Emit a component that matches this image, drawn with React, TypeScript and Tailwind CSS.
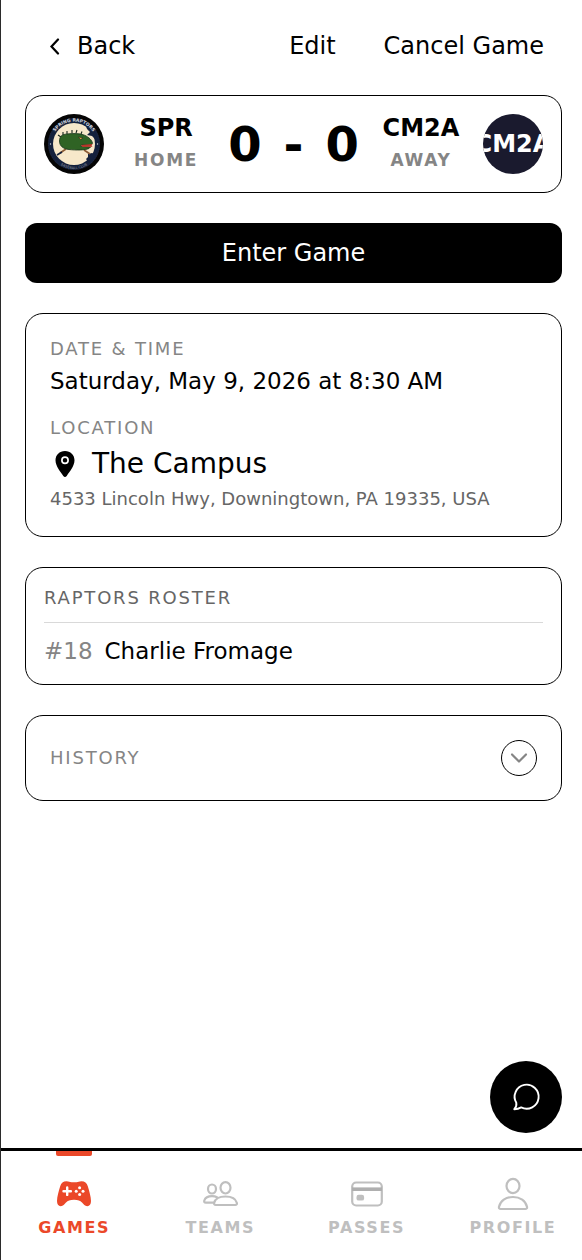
import { useState } from "react";
import type { ReactNode } from "react";

interface Player {
  number: number;
  name: string;
}

interface NavItem {
  label: string;
  href: string;
  icon: ReactNode;
  active?: boolean;
}

const roster: Player[] = [{ number: 18, name: "Charlie Fromage" }];

const GamesIcon = () => (
  <svg viewBox="0 0 36 36" className="w-9 h-9" aria-hidden="true">
    <path
      fill="currentColor"
      d="M10.5 5.3c2.400 0 3.200 1 5 1h5c1.800 0 2.600-1 5-1 3.300 0 5.300 1.700 6.300 5 1.300 4.300 3.200 10.700 3.200 14.700 0 3.200-1.400 5.200-3.700 5.200-2.500 0-3.700-2-5.300-3.600-1.900-1.900-3.800-2.800-8-2.800s-6.100.9-8 2.800c-1.600 1.600-2.800 3.600-5.300 3.600-2.300 0-3.700-2-3.700-5.200 0-4 1.900-10.400 3.200-14.700 1-3.300 3-5 6.300-5z"
    />
    <path d="M11.200 11.500v7.400M7.500 15.200h7.400" stroke="white" strokeWidth="2.400" strokeLinecap="round" />
    <g fill="white">
      <circle cx="23.600" cy="11.800" r="1.500" />
      <circle cx="23.600" cy="18.600" r="1.500" />
      <circle cx="20.200" cy="15.200" r="1.500" />
      <circle cx="27" cy="15.200" r="1.500" />
    </g>
  </svg>
);

const TeamsIcon = () => (
  <svg viewBox="0 0 36 36" className="w-9 h-9" fill="none" stroke="currentColor" strokeWidth="2.200" aria-hidden="true">
    <ellipse cx="23.500" cy="11.800" rx="5" ry="5.700" />
    <ellipse cx="10" cy="13" rx="4" ry="4.500" />
    <path d="M13.800 29h19.400c1.400 0 2-.8 1.600-2.200-1-3.800-5.200-6.300-11.300-6.300s-10.300 2.500-11.300 6.300c-.4 1.400.2 2.200 1.600 2.200z" />
    <path d="M15 21.300c-1.500-.8-3.100-1.100-5-1.100-4.100 0-6.700 1.500-7.700 4.300-.4 1.300.1 2.200 1.500 2.200h8" strokeLinecap="round" />
  </svg>
);

const PassesIcon = () => (
  <svg viewBox="0 0 36 36" className="w-9 h-9" aria-hidden="true">
    <rect x="3.200" y="6.500" width="29.600" height="23" rx="4" fill="none" stroke="currentColor" strokeWidth="2.200" />
    <path d="M3 13.200h30" stroke="#afafaf" strokeWidth="3.600" />
    <rect x="7.500" y="18.800" width="7.600" height="5.800" rx="2.200" fill="currentColor" />
  </svg>
);

const ProfileIcon = () => (
  <svg viewBox="0 0 36 36" className="w-9 h-9" fill="none" stroke="currentColor" strokeWidth="2.200" aria-hidden="true">
    <ellipse cx="18" cy="10" rx="6.500" ry="7.100" />
    <path d="M5.700 33h24.600c1.300 0 2-.8 1.700-2.200C30.700 24.900 25.200 21 18 21S5.300 24.900 4 30.800c-.3 1.400.4 2.200 1.700 2.200z" />
  </svg>
);

const navItems: NavItem[] = [
  { label: "Games", href: "#games", icon: <GamesIcon />, active: true },
  { label: "Teams", href: "#teams", icon: <TeamsIcon /> },
  { label: "Passes", href: "#passes", icon: <PassesIcon /> },
  { label: "Profile", href: "#profile", icon: <ProfileIcon /> },
];

function RaptorsLogo() {
  return (
    <svg viewBox="0 0 60 60" className="w-15 h-15 shrink-0" role="img" aria-label="Raptors logo">
      <defs>
        <path id="crest-top" d="M7.500 30a22.500 22.500 0 0 1 45 0" />
        <path id="crest-bottom" d="M5 30a25 25 0 0 0 50 0" />
      </defs>
      <circle cx="30" cy="30" r="30" fill="#050505" />
      <circle cx="30" cy="30" r="26" fill="#14213d" />
      <circle cx="30" cy="30" r="25.500" fill="none" stroke="#3d3038" strokeWidth="0.500" strokeDasharray="1 1.500" />
      <circle cx="30" cy="30" r="21" fill="#f7e8ca" />
      <path d="M42 12l10 7v7l-4-4-5-1 3-3-3-3zM44 40l4-1 4 2-7 8-3-4 2-2z" fill="#14213d" />
      <path d="M22 35l-6 4M40 36l6 4" stroke="#8b5a34" strokeWidth="1.600" />
      <path d="M18 38l-5 3" stroke="#14213d" strokeWidth="1.600" />
      <path d="M14 21l3 2M19 21l0-3M23 20l0-3M28 19l0-3M32 19l1-3M37 20l1-2.500" stroke="#17261c" strokeWidth="1.100" fill="none" />
      <path
        d="M15.500 27c0-4 2-6.300 6-6.800 5-.8 14-1.200 19 1 4.500 2 7.500 5 8 8l-1 1.500-10 .3-1 1.300 10 .7-1.500 1.500C41 36.300 32 36.300 25 35.500c-6-.7-9.500-3.500-9.500-8.500z"
        fill="#2f6324"
        stroke="#16331a"
        strokeWidth="0.800"
      />
      <path d="M37 31l11.500-1-1 1.500 1 1.200-10 .3z" fill="#b9362a" />
      <path d="M34.500 23l4.500 1-2.500 1.500z" fill="#f2b14a" stroke="#141414" strokeWidth="0.500" />
      <g fill="#d5d7dc" textAnchor="middle">
        <text fontSize="4.500" fontWeight="700">
          <textPath href="#crest-top" startOffset="50%">SPRING RAPTORS</textPath>
        </text>
        <text fillOpacity="0.600" fontSize="3.500">
          <textPath href="#crest-bottom" startOffset="50%">BASEBALL CLUB</textPath>
        </text>
      </g>
      <circle cx="6.500" cy="30" r="0.700" fill="#d5d7dc" />
      <circle cx="53.500" cy="30" r="0.700" fill="#d5d7dc" />
    </svg>
  );
}

function TeamName({ code, side }: { code: string; side: string }) {
  return (
    <div className="w-20 shrink-0 flex flex-col items-center gap-1 font-bold">
      <span className="text-2xl leading-7">{code}</span>
      <span className="text-[17px] leading-7 tracking-widest uppercase text-[#858585]">{side}</span>
    </div>
  );
}

function BottomNav() {
  return (
    <nav className="border-t-3 border-black bg-white overflow-hidden">
      <div className="grid grid-cols-4 -mr-1">
        {navItems.map((item) => (
          <a
            key={item.label}
            href={item.href}
            aria-current={item.active ? "page" : undefined}
            className={`flex flex-col items-center pb-5 ${item.active ? "text-[#eb4829]" : "text-[#bfbfbf]"}`}
          >
            <span className={`w-9 h-[5px] rounded-b-xs ${item.active ? "bg-[#eb4829]" : ""}`} />
            <span className="mt-5">{item.icon}</span>
            <span className="mt-1 text-base leading-6 font-bold tracking-widest uppercase">{item.label}</span>
          </a>
        ))}
      </div>
    </nav>
  );
}

export default function App() {
  const [historyOpen, setHistoryOpen] = useState(false);

  return (
    <div className="min-h-screen flex flex-col border-l border-[#2b2b2b] bg-white text-black font-['DejaVu_Sans',Verdana,sans-serif]">
      <main className="flex-1 pl-6 pr-5 pb-6">
        <header className="flex items-center h-[95px] pl-6 pr-[18px] pb-1 text-2xl leading-8">
          <button type="button" className="flex items-center gap-4">
            <svg viewBox="0 0 12 18" className="w-3 h-[18px]" fill="none" stroke="currentColor" strokeWidth="2.200" strokeLinecap="round" aria-hidden="true">
              <path d="M9 2.500L2.500 9.500 9 16.500" />
            </svg>
            Back
          </button>
          <button type="button" className="ml-auto">Edit</button>
          <button type="button" className="ml-12">Cancel Game</button>
        </header>

        <div className="flex flex-col gap-[30px]">
          {/* Scoreboard */}
          <section className="flex items-center justify-between border border-black rounded-[18px] p-[18px]">
            <RaptorsLogo />
            <TeamName code="SPR" side="Home" />
            <div className="flex items-center gap-[22px] text-5xl leading-none font-bold">
              <span>0</span>
              <span>-</span>
              <span>0</span>
            </div>
            <TeamName code="CM2A" side="Away" />
            <div className="w-15 h-15 shrink-0 rounded-full overflow-hidden bg-[#1a1a2e] text-white flex items-center justify-center text-2xl leading-7 font-bold">
              CM2A
            </div>
          </section>

          <button type="button" className="h-15 rounded-xl bg-black text-white text-2xl leading-8">
            Enter Game
          </button>

          {/* Date and location */}
          <section className="border border-black rounded-[18px] px-6 pt-[19px] pb-[22px]">
            <h2 className="text-lg leading-8 tracking-widest uppercase text-[#858585]">Date &amp; Time</h2>
            <p className="text-[23px] leading-8">Saturday, May 9, 2026 at 8:30 AM</p>
            <h2 className="mt-[15px] text-lg leading-8 tracking-widest uppercase text-[#858585]">Location</h2>
            <div className="flex items-center gap-3">
              <svg viewBox="0 0 30 30" className="w-[30px] h-[30px]" aria-hidden="true">
                <path d="M15 2c5.500 0 9.500 4 9.500 9.300 0 5.700-5 11.700-7.800 15.700-1 1.300-2.400 1.300-3.400 0C10.500 23 5.500 17 5.500 11.300 5.500 6 9.500 2 15 2z" />
                <circle cx="15" cy="11.300" r="3.100" fill="none" stroke="white" strokeWidth="1.700" />
              </svg>
              <p className="text-[28px] leading-10">The Campus</p>
            </div>
            <p className="text-lg leading-[30px] text-[#666666]">4533 Lincoln Hwy, Downingtown, PA 19335, USA</p>
          </section>

          {/* Roster */}
          <section className="border border-black rounded-[18px] px-[18px] pt-3.5 pb-[17px]">
            <h2 className="pb-2 border-b border-[#d9d9d9] text-lg leading-8 tracking-widest uppercase text-[#666666]">
              Raptors Roster
            </h2>
            <ul className="pt-3">
              {roster.map((player) => (
                <li key={player.number} className="flex items-center gap-3 text-[23px] leading-8">
                  <span className="text-[#858585]">#{player.number}</span>
                  <span>{player.name}</span>
                </li>
              ))}
            </ul>
          </section>

          <section className="border border-black rounded-[18px] px-6 py-6">
            <button
              type="button"
              aria-expanded={historyOpen}
              onClick={() => setHistoryOpen(!historyOpen)}
              className="w-full flex items-center justify-between text-lg leading-8 tracking-widest uppercase text-[#858585]"
            >
              History
              <span className="w-9 h-9 rounded-full border border-black flex items-center justify-center">
                <svg viewBox="0 0 18 18" className="w-[18px] h-[18px]" fill="none" stroke="currentColor" strokeWidth="2.200" strokeLinecap="round" strokeLinejoin="round" aria-hidden="true">
                  <path d="M2 5.500l7 7 7-7" />
                </svg>
              </span>
            </button>
            {historyOpen && <p className="pt-4 text-lg text-[#666666]">No history yet</p>}
          </section>
        </div>
      </main>

      <div className="sticky bottom-0">
        <button
          type="button"
          aria-label="Open chat"
          className="absolute right-5 bottom-full mb-[15px] w-18 h-18 rounded-full bg-black text-white flex items-center justify-center"
        >
          <svg viewBox="0 0 30 30" className="w-[30px] h-[30px]" fill="none" stroke="currentColor" strokeWidth="1.900" strokeLinejoin="round" aria-hidden="true">
            <path d="M5.300 20.800A12 12 0 1 1 10.200 25.400C8.500 26.400 6 27.200 3.300 27.200c1.700-1.900 2.400-4.200 2-6.400z" />
          </svg>
        </button>
        <BottomNav />
      </div>
    </div>
  );
}
